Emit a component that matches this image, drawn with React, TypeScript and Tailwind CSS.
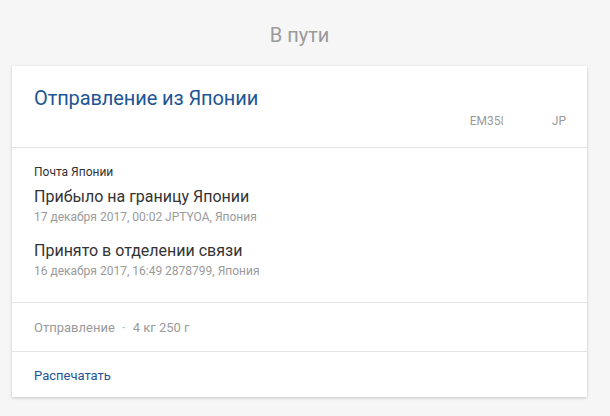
import React from "react";

export default function App() {
  return (
    <div className="min-h-[416px] w-[610px] bg-[#f6f6f6] pt-[22px]" style={{ fontFamily: "Roboto, 'Liberation Sans', sans-serif" }}>
      <div className="w-[599px] text-center text-[20px] leading-[26px] text-[#9a9a9a]">В пути</div>
      <div className="ml-[12px] mt-[18px] w-[575px] bg-white shadow-[0_1px_3px_rgba(0,0,0,0.2)]">
        <div className="border-b border-[#e4e4e4] px-[22px] pt-[20px] pb-[18px]">
          <div className="text-[20px] leading-[24px] tracking-[-0.1px] text-[#1d5595]">Отправление из Японии</div>
          <div className="mt-[3px] flex justify-end text-[12px] leading-[16px] text-[#9a9a9a]">
            <span className="w-[33px] overflow-hidden whitespace-nowrap">EM358</span>
            <span className="ml-[49px] mr-[-1px]">JP</span>
          </div>
        </div>
        <div className="border-b border-[#e4e4e4] px-[22px] pt-[16px] pb-[23px]">
          <div className="text-[12px] leading-[16px] text-[#333]">Почта Японии</div>
          <div className="mt-[7px] text-[16px] leading-[20px] text-[#333]">Прибыло на границу Японии</div>
          <div className="mt-[2px] text-[12px] leading-[16px] text-[#9a9a9a]">17 декабря 2017, 00:02 JPTYOA, Япония</div>
          <div className="mt-[16px] text-[16px] leading-[20px] text-[#333]">Принято в отделении связи</div>
          <div className="mt-[2px] text-[12px] leading-[16px] text-[#9a9a9a]">16 декабря 2017, 16:49 2878799, Япония</div>
        </div>
        <div className="border-b border-[#e4e4e4] px-[22px] pt-[16px] pb-[15px] text-[13px] leading-[17px] text-[#9a9a9a]">
          Отправление <span className="mx-[4px]">·</span> 4 кг 250 г
        </div>
        <div className="px-[22px] pt-[15px] pb-[13px] text-[13px] leading-[17px] text-[#1d5595]">Распечатать</div>
      </div>
    </div>
  );
}
